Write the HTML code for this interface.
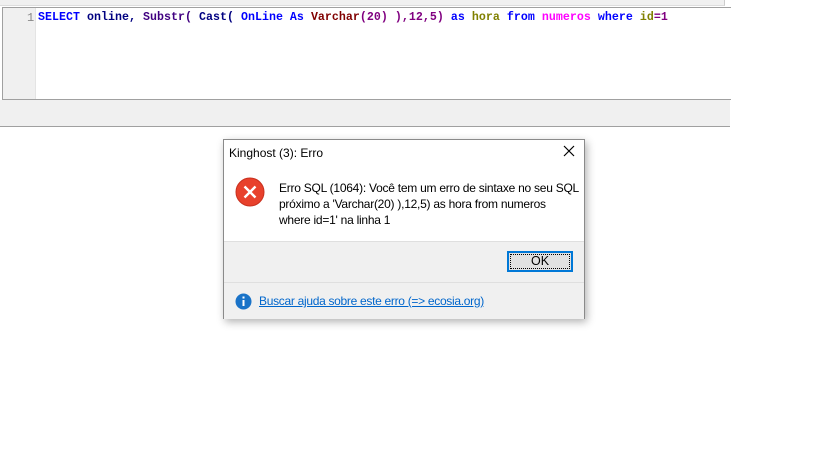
<!DOCTYPE html>
<html><head><style>
body{margin:0;width:819px;height:460px;background:#fff;position:relative;overflow:hidden;font-family:"Liberation Sans",sans-serif}
.top{position:absolute;left:0;top:0;width:724px;height:5px;background:#f0f0f0;border-right:1px solid #ccc;border-bottom:1px solid #ddd}
.ed{position:absolute;left:2px;top:7px;width:728px;height:91px;border:1px solid #a0a0a0;border-right:none;background:#fff}
.gut{position:absolute;left:0;top:0;width:32px;height:91px;background:#f0f0f0;border-right:1px solid #e4e4e4}
.ln{position:absolute;left:24px;top:3px;font:12px "Liberation Mono",monospace;color:#888}
.code{position:absolute;left:35px;top:3px;font:bold 11.6px "Liberation Mono",monospace;letter-spacing:0.04px;white-space:pre;color:#000080}
.bar{position:absolute;left:0;top:100px;width:730px;height:26px;background:#f0f0f0;border-bottom:1px solid #a0a0a0}
.dlg{position:absolute;left:223px;top:139px;width:360px;height:178px;border:1px solid #8a8a8a;background:#fff;box-shadow:2px 3px 8px rgba(0,0,0,.3)}
.title{position:absolute;left:5px;top:6px;font-size:12px;color:#000}
.x{position:absolute;left:339px;top:5px}
.msg{position:absolute;left:55px;top:40px;font-size:12px;letter-spacing:-0.25px;line-height:16px;color:#000;white-space:nowrap}
.gray{position:absolute;left:0;top:101px;width:360px;height:77px;background:#f0f0f0;border-top:1px solid #dfdfdf}
.ok{position:absolute;left:283px;top:9px;width:66px;height:21px;border:2px solid #0078d7;background:#e1e1e1;box-sizing:border-box;text-align:center;font-size:12.5px;line-height:17px;outline:1px dotted #000;outline-offset:-4px}
.sep{position:absolute;left:0;top:40px;width:360px;border-top:1px solid #dfdfdf}
.link{position:absolute;left:35px;top:52px;font-size:12px;letter-spacing:-0.3px;color:#0066cc;text-decoration:underline;white-space:nowrap}
</style></head><body>
<div class="top"></div>
<div class="ed"><div class="gut"><span class="ln">1</span></div>
<div class="code"><span style="color:#0000ff">SELECT</span> online, <span style="color:#400080">Substr(</span> <span style="color:#000080">Cast(</span> <span style="color:#0000ff">OnLine As</span> <span style="color:#800000">Varchar</span><span style="color:#800080">(20) ),12,5)</span> <span style="color:#0000ff">as</span> <span style="color:#808000">hora</span> <span style="color:#0000ff">from</span> <span style="color:#ff00ff">numeros</span> <span style="color:#0000ff">where</span> <span style="color:#808000">id</span><span style="color:#800080">=1</span></div></div>
<div class="bar"></div>
<div class="dlg">
<div class="title">Kinghost (3): Erro</div>
<svg class="x" width="12" height="12" viewBox="0 0 12 12"><path d="M1 1L11 11M11 1L1 11" stroke="#000" stroke-width="1.2"/></svg>
<svg style="position:absolute;left:11px;top:37px" width="30" height="30" viewBox="0 0 30 30"><circle cx="15" cy="15" r="14" fill="#e8412c" stroke="#c9301e"/><path d="M9.5 9.5L20.5 20.5M20.5 9.5L9.5 20.5" stroke="#fff" stroke-width="2.4"/></svg>
<div class="msg">Erro SQL (1064): Você tem um erro de sintaxe no seu SQL<br>próximo a 'Varchar(20) ),12,5) as hora from numeros<br>where id=1' na linha 1</div>
<div class="gray">
<div class="ok">OK</div>
<div class="sep"></div>
<svg style="position:absolute;left:11px;top:51px" width="17" height="17" viewBox="0 0 17 17"><circle cx="8.5" cy="8.5" r="8" fill="#1a73c8"/><rect x="7.5" y="7" width="2" height="6" fill="#fff"/><rect x="7.5" y="3.5" width="2" height="2" fill="#fff"/></svg>
<div class="link">Buscar ajuda sobre este erro (=&gt; ecosia.org)</div>
</div>
</div>
</body></html>
